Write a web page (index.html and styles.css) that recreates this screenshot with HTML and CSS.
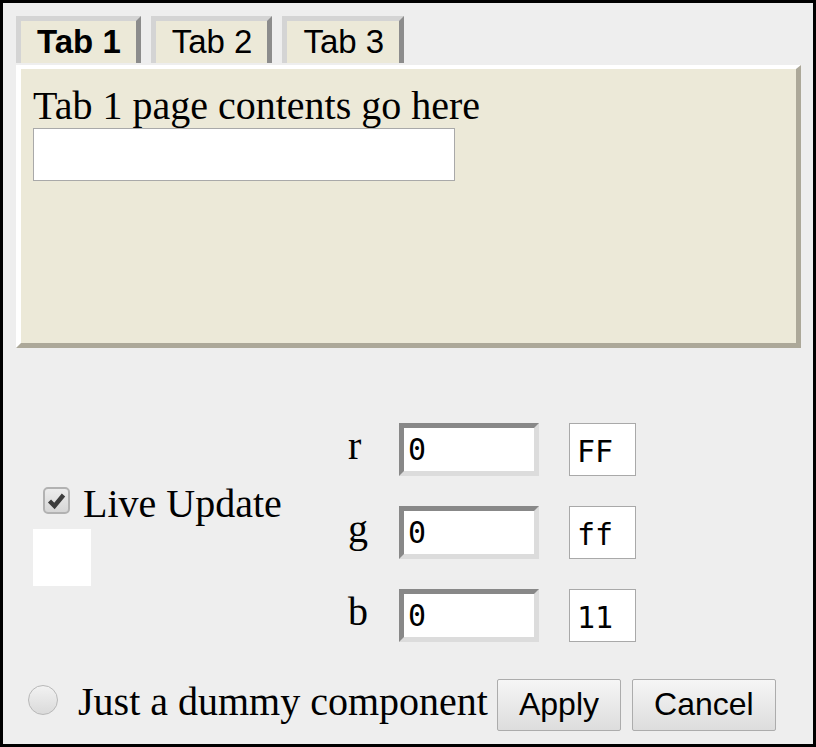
FILE: index.html
```html
<!DOCTYPE html>
<html>
<head>
<meta charset="utf-8">
<link rel="stylesheet" href="styles.css">
</head>
<body>
<div class="frame">
  <div class="tabs">
    <div class="tab active">Tab 1</div>
    <div class="tab">Tab 2</div>
    <div class="tab">Tab 3</div>
  </div>
  <div class="panel">
    <div class="panel-title">Tab 1 page contents go here</div>
    <input class="panel-input" type="text">
  </div>
  <div class="controls">
    <div class="live">
      <div class="live-row">
        <span class="chk"><svg width="23" height="23" viewBox="0 0 23 23"><path d="M4.5 12 L9.5 17 L18.5 6" fill="none" stroke="#3d3d3d" stroke-width="4.4" stroke-linejoin="miter" stroke-linecap="butt"/></svg></span>
        <span class="live-label">Live Update</span>
      </div>
      <div class="swatch"></div>
    </div>
    <div class="rgb">
      <span class="lbl">r</span><input class="num" type="text" value="0"><div class="hex">FF</div>
      <span class="lbl">g</span><input class="num" type="text" value="0"><div class="hex">ff</div>
      <span class="lbl">b</span><input class="num" type="text" value="0"><div class="hex">11</div>
    </div>
  </div>
  <div class="footer">
    <span class="radio"></span>
    <span class="dummy">Just a dummy component</span>
    <button class="btn">Apply</button>
    <button class="btn cancel">Cancel</button>
  </div>
</div>
</body>
</html>
```
FILE: styles.css
```css
html, body {
  margin: 0;
  padding: 0;
}
.frame {
  width: 816px;
  height: 747px;
  box-sizing: border-box;
  border: 3px solid #000;
  background: #eeeeee;
  padding: 13px 12px 0 13px;
  font-family: "Liberation Serif", serif;
  color: #000;
}
.tabs {
  display: flex;
  gap: 10px;
  align-items: flex-end;
}
.tab {
  height: 47px;
  box-sizing: border-box;
  border-top: 5px solid #d4d4d4;
  border-left: 5px solid #d4d4d4;
  border-right: 5px solid #8c8c8c;
  background: #ece9d8;
  padding: 0 15px 0 16px;
  font-family: "Liberation Sans", Arial, sans-serif;
  font-size: 33px;
  line-height: 42px;
}
.tab.active {
  font-weight: bold;
}
.panel {
  margin-top: 2px;
  height: 283px;
  box-sizing: border-box;
  border-style: solid;
  border-width: 4px 5px 5px 5px;
  border-color: #ffffff #aca899 #aca899 #ffffff;
  background: #ece9d8;
  padding: 13px 12px;
}
.panel-title {
  font-size: 40px;
  line-height: normal;
}
.panel-input {
  display: block;
  margin: -1px 0 0 0;
  width: 422px;
  height: 53px;
  box-sizing: border-box;
  border: 1px solid #a9a9a9;
  background: #fff;
  padding: 0;
  outline: none;
}
.controls {
  margin-top: 75px;
  display: flex;
  align-items: center;
  padding-left: 17px;
}
.live {
  width: 315px;
}
.live-row {
  display: flex;
  align-items: center;
}
.chk {
  width: 27px;
  height: 27px;
  box-sizing: border-box;
  margin-left: 10px;
  margin-right: 13px;
  margin-bottom: 5px;
  border: 2px solid #b2b2b2;
  border-radius: 5px;
  background: linear-gradient(#ececec, #d6d6d6);
  display: flex;
  align-items: center;
  justify-content: center;
}
.chk svg {
  display: block;
}
.live-label {
  font-size: 40px;
  line-height: normal;
}
.swatch {
  width: 58px;
  height: 57px;
  margin-top: 2px;
  background: #fff;
}
.rgb {
  display: grid;
  grid-template-columns: 51px 170px 67px;
  grid-auto-rows: 53px;
  row-gap: 30px;
  align-items: center;
}
.lbl {
  font-size: 40px;
  line-height: 45px;
  align-self: start;
}
.num {
  width: 140px;
  height: 53px;
  box-sizing: border-box;
  margin: 0;
  border-style: solid;
  border-width: 5px;
  border-color: #888888 #dcdcdc #dcdcdc #888888;
  background: #fff;
  padding: 0 0 0 4px;
  font-family: "DejaVu Sans Mono", monospace;
  font-size: 30px;
  color: #000;
  outline: none;
}
.hex {
  width: 67px;
  height: 53px;
  box-sizing: border-box;
  border: 1px solid #a9a9a9;
  background: #fff;
  padding: 3px 0 0 7px;
  display: flex;
  align-items: center;
  font-family: "DejaVu Sans Mono", monospace;
  font-size: 30px;
}
.footer {
  margin-top: 36px;
  display: flex;
  align-items: center;
  padding-left: 12px;
}
.radio {
  width: 30px;
  height: 30px;
  box-sizing: border-box;
  border: 1px solid #b8b8b8;
  border-radius: 50%;
  background: linear-gradient(#f2f2f2, #dadada);
  margin-right: 20px;
  margin-bottom: 10px;
}
.dummy {
  font-size: 40px;
  line-height: normal;
  margin-right: 9px;
  margin-bottom: 6px;
}
.btn {
  height: 52px;
  box-sizing: border-box;
  margin: 0;
  padding: 0 21px;
  border: 1px solid #acacac;
  border-radius: 2px;
  background: linear-gradient(#f6f6f6, #dddddd);
  font-family: "Liberation Sans", Arial, sans-serif;
  font-size: 32px;
  color: #000;
}
.btn.cancel {
  margin-left: 11px;
}
```
